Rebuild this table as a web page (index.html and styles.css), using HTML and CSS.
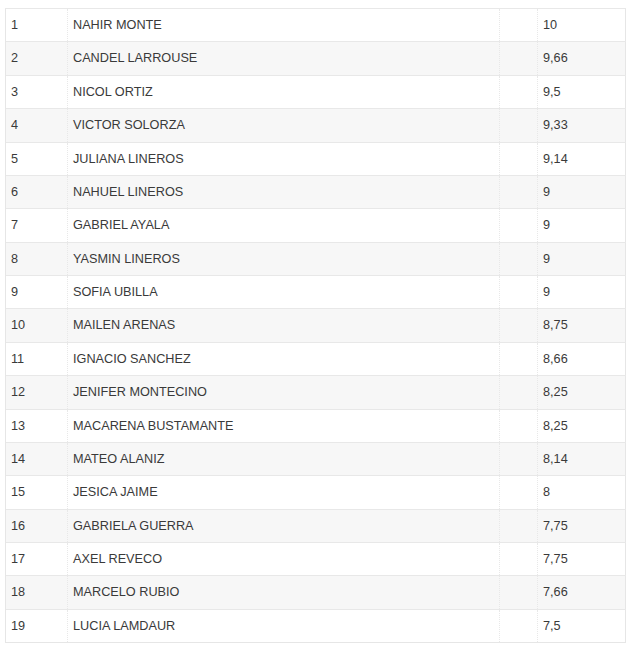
FILE: index.html
```html
<!DOCTYPE html>
<html>
<head>
<meta charset="utf-8">
<link rel="stylesheet" href="styles.css">
</head>
<body>
<table class="ranking">
  <colgroup>
    <col class="c-pos"><col class="c-name"><col class="c-gap"><col class="c-score">
  </colgroup>
  <tbody>
    <tr><td>1</td><td>NAHIR MONTE</td><td></td><td>10</td></tr>
    <tr><td>2</td><td>CANDEL LARROUSE</td><td></td><td>9,66</td></tr>
    <tr><td>3</td><td>NICOL ORTIZ</td><td></td><td>9,5</td></tr>
    <tr><td>4</td><td>VICTOR SOLORZA</td><td></td><td>9,33</td></tr>
    <tr><td>5</td><td>JULIANA LINEROS</td><td></td><td>9,14</td></tr>
    <tr><td>6</td><td>NAHUEL LINEROS</td><td></td><td>9</td></tr>
    <tr><td>7</td><td>GABRIEL AYALA</td><td></td><td>9</td></tr>
    <tr><td>8</td><td>YASMIN LINEROS</td><td></td><td>9</td></tr>
    <tr><td>9</td><td>SOFIA UBILLA</td><td></td><td>9</td></tr>
    <tr><td>10</td><td>MAILEN ARENAS</td><td></td><td>8,75</td></tr>
    <tr><td>11</td><td>IGNACIO SANCHEZ</td><td></td><td>8,66</td></tr>
    <tr><td>12</td><td>JENIFER MONTECINO</td><td></td><td>8,25</td></tr>
    <tr><td>13</td><td>MACARENA BUSTAMANTE</td><td></td><td>8,25</td></tr>
    <tr><td>14</td><td>MATEO ALANIZ</td><td></td><td>8,14</td></tr>
    <tr><td>15</td><td>JESICA JAIME</td><td></td><td>8</td></tr>
    <tr><td>16</td><td>GABRIELA GUERRA</td><td></td><td>7,75</td></tr>
    <tr><td>17</td><td>AXEL REVECO</td><td></td><td>7,75</td></tr>
    <tr><td>18</td><td>MARCELO RUBIO</td><td></td><td>7,66</td></tr>
    <tr><td>19</td><td>LUCIA LAMDAUR</td><td></td><td>7,5</td></tr>
  </tbody>
</table>
</body>
</html>
```
FILE: styles.css
```css
html, body {
  margin: 0;
  padding: 0;
  background: #ffffff;
}
body {
  padding: 8px 0 0 5px;
  font-family: "Liberation Sans", Arial, sans-serif;
  font-size: 12.7px;
  color: #3a3a3a;
}
.ranking {
  border-collapse: collapse;
  table-layout: fixed;
  width: 620px;
  border: 1px solid #e6e6e6;
}
.c-pos { width: 62px; }
.c-name { width: 432px; }
.c-gap { width: 38px; }
.c-score { width: 88px; }
.ranking td {
  padding: 7px 5px;
  line-height: 18.37px;
  border-top: 1px solid #e8e8e8;
  border-left: 1px dotted #e8e8e8;
  text-align: left;
  vertical-align: middle;
  white-space: nowrap;
}
.ranking td:first-child {
  border-left: 1px solid #e6e6e6;
}
.ranking tr:nth-child(even) td {
  background: #f7f7f7;
}
```
